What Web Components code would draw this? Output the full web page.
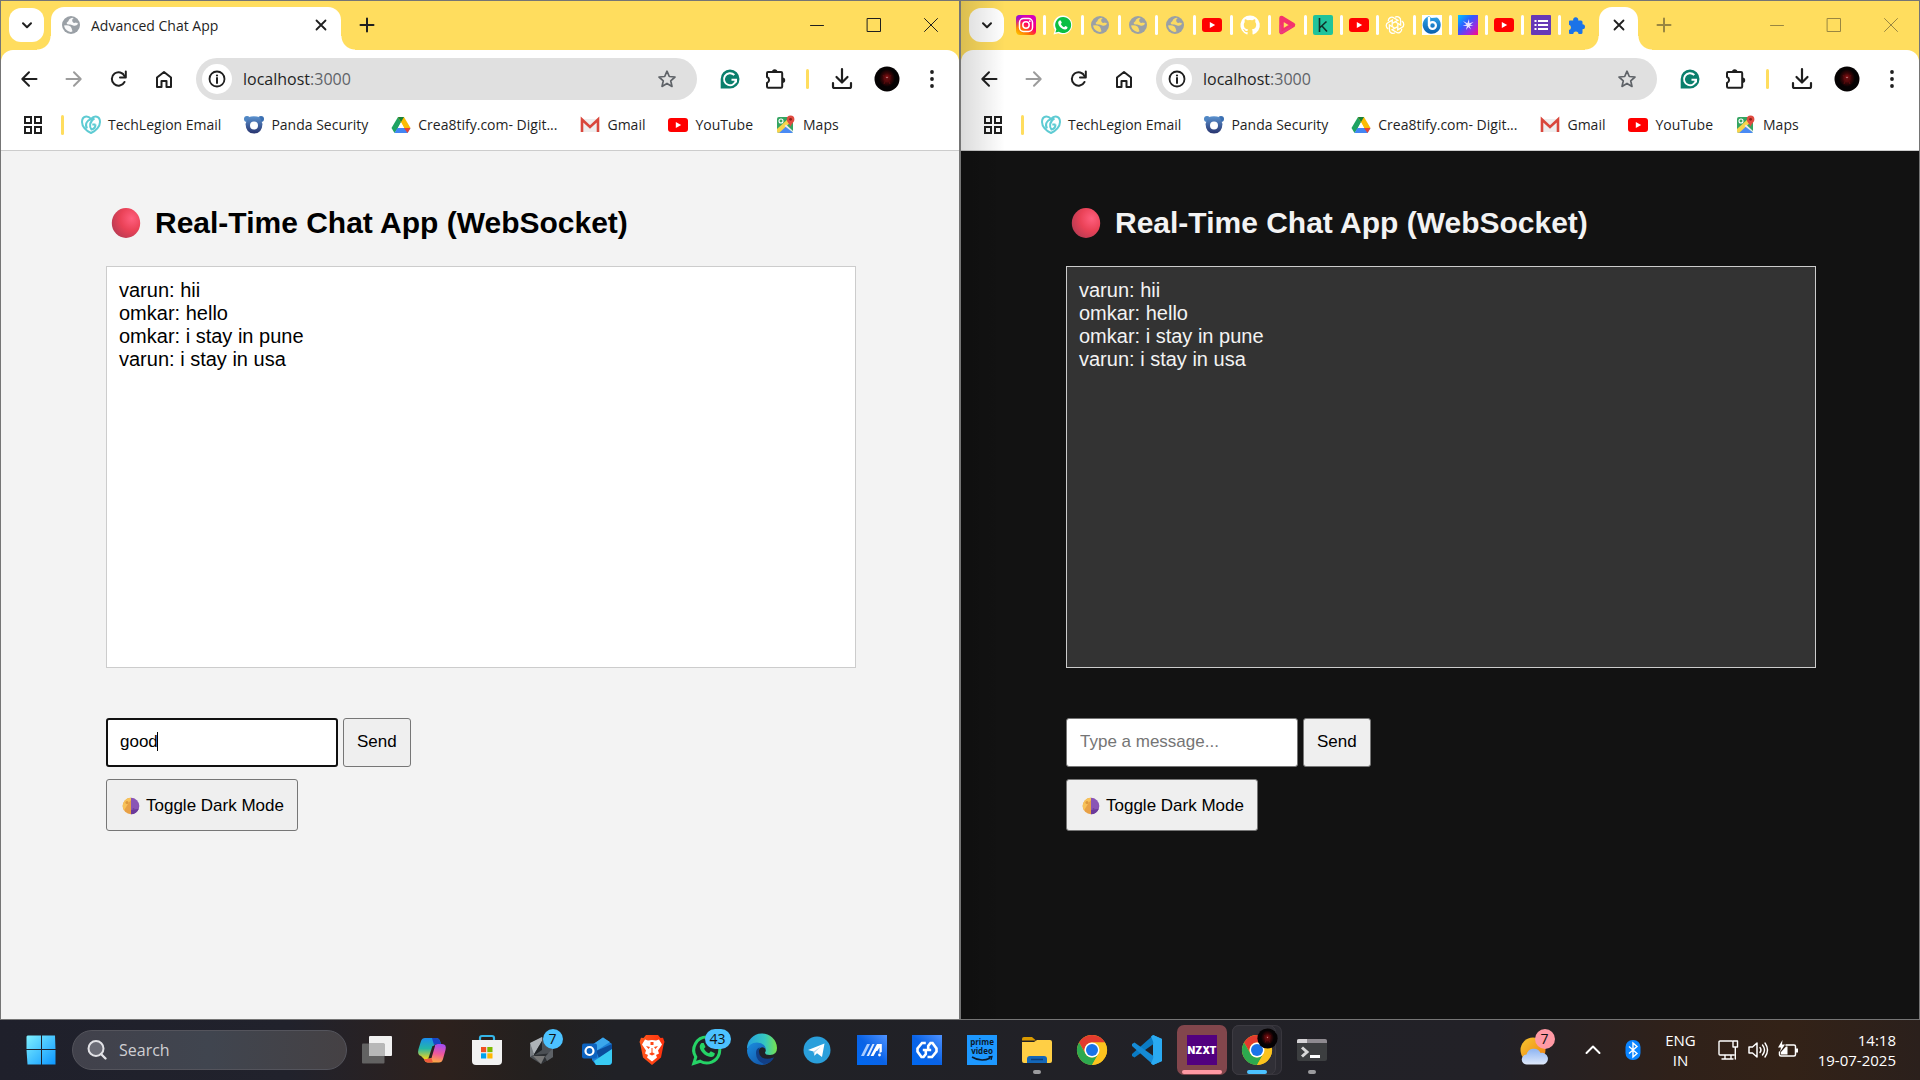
<!DOCTYPE html>
<html lang="en">
<head>
<meta charset="utf-8">
<title>Advanced Chat App</title>
<style>
  html, body { height: 100%; }
  body { margin: 0; display: flex; flex-direction: column; overflow: hidden; background: #202026; font-family: "Open Sans", sans-serif; }
  main { flex: 1; min-height: 0; display: grid; grid-template-columns: 1fr 1fr; }
</style>
</head>
<body>
<main>
  <browser-window>
    <wide-tab slot="tabs">Advanced Chat App</wide-tab>
    <chat-app value="good">
      <chat-message from="varun">hii</chat-message>
      <chat-message from="omkar">hello</chat-message>
      <chat-message from="omkar">i stay in pune</chat-message>
      <chat-message from="varun">i stay in usa</chat-message>
    </chat-app>
  </browser-window>
  <browser-window inactive>
    <pinned-tabs slot="tabs"></pinned-tabs>
    <chat-app dark>
      <chat-message from="varun">hii</chat-message>
      <chat-message from="omkar">hello</chat-message>
      <chat-message from="omkar">i stay in pune</chat-message>
      <chat-message from="varun">i stay in usa</chat-message>
    </chat-app>
  </browser-window>
</main>
<task-bar></task-bar>

<script>
const S = 'fill="none" stroke="currentColor" stroke-linecap="round" stroke-linejoin="round"';
const CHROME = `<circle cx="15" cy="15" r="15" fill="#fbc116"/><path d="M2 7.5A15 15 0 0 1 28 7.5H15A7.5 7.5 0 0 0 8.5 18.8z" fill="#e33b2e"/><path d="M2 7.5A15 15 0 0 0 15 30L21.5 18.8A7.5 7.5 0 0 1 8.5 18.8z" fill="#2da94f"/><path d="M28 7.5A15 15 0 0 1 15 30L21.5 18.8A7.5 7.5 0 0 0 21.5 11.2 8 8 0 0 0 15 7.5z" fill="#fcc31e"/><circle cx="15" cy="15" r="7.5" fill="#fff"/><circle cx="15" cy="15" r="6" fill="#1a73e8"/>`;
const AVATAR = `<defs><radialGradient id="a"><stop offset="0" stop-color="#a01518"/><stop offset=".55" stop-color="#3a0507"/><stop offset="1" stop-color="#050203"/></radialGradient></defs>`;
const ICONS = {
  chevronDown: [12, `<path d="M2 4.2l4 4 4-4" ${S} stroke-width="2" stroke-linecap="butt"/>`],
  close: [12, `<path d="M1.5 1.5l9 9M10.500 1.500l-9 9" ${S} stroke-width="1.800" stroke-linecap="butt"/>`],
  plus: [14, `<path d="M7 .5v13M.5 7h13" ${S} stroke-width="2" stroke-linecap="butt"/>`],
  min: [14, `<path d="M.5 7.500h13" ${S} stroke-width="1"/>`],
  max: [14, `<rect x=".5" y=".5" width="13" height="13" ${S} stroke-width="1"/>`],
  winClose: [14, `<path d="M.5.5l13 13M13.500.5l-13 13" ${S} stroke-width="1"/>`],
  globe: [18, `<circle cx="9" cy="9" r="9" fill="#9aa0a6"/><path d="M10.500 1.800Q7 2.500 6.500 5L4.500 7Q5 9 8.200 8.500l1.800.5q1 1 2.800.8t3.400-2Q15.500 6 13.500 6.300T11 5.500 12.200 3.200z" fill="var(--hole,#fff)" opacity=".95"/><path d="M11 2.500Q9.500 4 10.500 5.800T13.500 6.500q1.500-.200 2.500 1.300Q15 3.500 11 2.500z" fill="#9aa0a6"/><path d="M2 9.500q2-.700 4.500 0t3 2.500 1 3.200Q9 16.500 7 15.500 3 14 2 9.500z" fill="var(--hole,#fff)" opacity=".95"/>`],
  back: [16, `<path d="M15.500 8H1.500M8 1.200L1.300 8 8 14.800" ${S} stroke-width="2" stroke-linecap="butt"/>`],
  forward: [16, `<path d="M.5 8h14M8 1.200L14.700 8 8 14.800" ${S} stroke-width="2" stroke-linecap="butt"/>`],
  reload: [16, `<path d="M13.500 11A6.700 6.700 0 1 1 13.700 5.300" ${S} stroke-width="2"/><path d="M14.800.5v6H9" ${S} stroke-width="2" stroke-linejoin="miter" stroke-linecap="butt"/>`],
  home: [18, `<path d="M2 7.500L9 2l7 5.500V17h-4.500v-6h-5v6H2z" ${S} stroke-width="2" stroke-linejoin="miter"/>`],
  info: [18, `<circle cx="9" cy="9" r="7.500" ${S} stroke-width="1.800"/><path d="M9 8v5" ${S} stroke-width="2" stroke-linecap="butt"/><circle cx="9" cy="5.500" r="1.100" fill="currentColor"/>`],
  star: [20, `<path d="M10 2.200l2.300 5.300 5.700.5-4.300 3.800 1.300 5.600-5-3-5 3 1.300-5.600L2 8l5.700-.5z" ${S} stroke-width="1.700" stroke-linejoin="miter"/>`],
  grammarly: [20, `<path d="M10 .5A9.500 9.500 0 1 1 10 19.500H.7V10A9.400 9.400 0 0 1 10 .5z" fill="#0b7f6c"/><path d="M14.300 6A6 6 0 1 0 16 10.700h-4.500M16 10.700v2.800" fill="none" stroke="#fff" stroke-width="2"/>`],
  puzzle: [22, `<path d="M3 4h13q1.200 0 1.200 1.200V18.500q0 1.200-1.200 1.200H3.200q-1.200 0-1.200-1.200V15a3.200 3.200 0 0 0 0-6V5q0-1 1-1z" ${S} stroke-width="2"/><path d="M7 4a2.700 2.700 0 0 1 5.400 0zM17.500 9.500a2.700 2.700 0 0 1 0 5.400z" fill="currentColor"/>`],
  download: [20, `<path d="M10 0v13M4.500 8l5.500 5.500L15.500 8M1 14v3.500Q1 19 2.500 19h15q1.500 0 1.500-1.500V14" ${S} stroke-width="2.200" stroke-linecap="butt"/>`],
  avatar: [26, AVATAR + `<circle cx="13" cy="13" r="12.500" fill="#050203"/><ellipse cx="13" cy="12" rx="8" ry="9" fill="url(#a)"/><path d="M9 9l4 6 4-6M10 18l3-7 3 7" fill="none" stroke="#5a0c0e"/><circle cx="13" cy="11.500" r=".8" fill="#c88"/>`],
  dots: [18, `<circle cx="9" cy="2" r="1.900" fill="currentColor"/><circle cx="9" cy="9" r="1.900" fill="currentColor"/><circle cx="9" cy="16" r="1.900" fill="currentColor"/>`],
  apps: [18, `<path d="M1 1h6v6H1zM11 1h6v6h-6zM1 11h6v6H1zM11 11h6v6h-6z" fill="none" stroke="currentColor" stroke-width="2"/>`],
  godaddy: [20, `<path d="M10 18C5 16 1 11.500 1 7c0-6 5.500-7 9-3 3.500-4 9-3 9 3 0 4.500-4 9-9 11zM6 13.500C3.500 9 6 5.500 10 4M14.500 9.500h-3.200M14.500 9.500c0 3-2 4.500-4 5-2.500-3-2-8 3-11" fill="none" stroke="#5ecbd3" stroke-width="2"/>`],
  panda: [20, `<defs><linearGradient id="g" x2="0" y2="1"><stop offset="0" stop-color="#5a92cf"/><stop offset="1" stop-color="#28346f"/></linearGradient></defs><circle cx="3" cy="4" r="3" fill="#4e86c4"/><circle cx="17" cy="4" r="3" fill="#3a6fb2"/><path d="M4 2.500Q10 0 16 2.500L18.500 9Q18 18.500 10 18.500T1.500 9z" fill="url(#g)"/><circle cx="10" cy="10.500" r="4" fill="#fff"/>`],
  drive: [20, `<path d="M7 2h6L6.500 14 3.500 18 .5 13z" fill="#1ea362"/><path d="M7 2h6l6.500 11H13z" fill="#fbbc05"/><path d="M6.500 13h13l-3 5h-13z" fill="#4285f4"/><path d="M7 2h6l-3 5z" fill="#188038"/><path d="M13 13h6.500l-3 5z" fill="#ea4335"/><path d="M10 7.200L13.200 13H6.800z" fill="#fff"/>`],
  gmail: [20, `<path d="M2 4h16v13H2z" fill="#eee"/><path d="M2 17V4.500L10 12l8-7.500V17" fill="none" stroke="#d9473c" stroke-width="2.600"/>`],
  youtube: [20, `<rect y="3" width="20" height="14" rx="3" fill="#f00"/><path d="M7.800 7l5.400 3-5.400 3z" fill="#fff"/>`],
  maps: [20, `<rect x="1" y="2" width="16" height="16" rx="2" fill="#34a461"/><path d="M2 18L10 10l7 8z" fill="#4a8af4"/><path d="M1 17V14L13 3l3 3L3 18z" fill="#f7d44c"/><path d="M10 9.500L17 16v1.500L8.500 11z" fill="#e8eaed"/><circle cx="5" cy="6" r="2" fill="none" stroke="#fff" stroke-width="1.100"/><path d="M14.500 12C14 9 10.800 7.500 10.800 4.300a3.800 3.800 0 0 1 7.600 0C18.400 7.500 15 9 14.500 12z" fill="#e04a3f"/><circle cx="14.600" cy="4.300" r="1.400" fill="#8c2019"/>`],
  instagram: [20, `<defs><linearGradient id="g" x1="0" y1="1" x2=".8" y2="0"><stop offset="0" stop-color="#ffd600"/><stop offset=".35" stop-color="#ff6a00"/><stop offset=".6" stop-color="#ff0169"/><stop offset="1" stop-color="#d300c5"/></linearGradient><linearGradient id="h" x2=".6" y2=".6"><stop offset="0" stop-color="#5b1cff"/><stop offset=".6" stop-color="#b0f" stop-opacity="0"/></linearGradient></defs><rect width="20" height="20" rx="4" fill="url(#g)"/><rect width="20" height="20" rx="4" fill="url(#h)"/><rect x="3.500" y="3.500" width="13" height="13" rx="4" fill="none" stroke="#fff" stroke-width="1.500"/><circle cx="10" cy="10" r="3.200" fill="none" stroke="#fff" stroke-width="1.500"/><circle cx="13.800" cy="6.200" r=".9" fill="#fff"/>`],
  whatsapp: [20, `<path d="M10 .5a9.400 9.400 0 1 1-4.600 17.700L.5 19.600 1.900 15A9.400 9.400 0 0 1 10 .5z" fill="#fff"/><path d="M10 2a8 8 0 1 1-4.200 14.700L2.400 17.600l1-3.300A8 8 0 0 1 10 2z" fill="#0bbf43"/><path d="M6.500 5.500l1.300 0 1 2.300-1 1.200c.8 1.600 1.800 2.500 3.300 3.200l1.200-1.200 2.200 1.100c0 2-1.500 2.500-2.500 2.400-3.500-.6-6.500-3.500-6.800-6.500 0-1 .5-2 1.300-2.500z" fill="#fff"/>`],
  github: [20, `<path d="M10 .5A9.700 9.700 0 0 0 7 19.400c.5.100.6-.2.6-.5v-1.800c-2.700.6-3.300-1.100-3.300-1.100-.5-1.200-1.100-1.500-1.100-1.500-.9-.6.100-.6.100-.6 1 .1 1.500 1 1.500 1 .9 1.500 2.300 1.100 2.800.8.100-.6.400-1.100.600-1.300C6 14.200 3.800 13.300 3.800 9.500c0-1 .4-1.900 1-2.600-.1-.3-.4-1.300.1-2.600 0 0 .8-.3 2.700 1a9 9 0 0 1 4.800 0c1.900-1.300 2.700-1 2.700-1 .5 1.300.2 2.300.1 2.600.600.7 1 1.600 1 2.600 0 3.800-2.200 4.600-4.400 4.900.4.300.7.900.7 1.800v2.700c0 .3.200.6.700.5A9.700 9.700 0 0 0 10 .5z" fill="#fff"/>`],
  pinkPlay: [20, `<path d="M4.500 3L16 10 4.500 17z" fill="none" stroke="#f5326c" stroke-width="4.500" stroke-linejoin="round"/><path d="M3.500 18V10M4 18l11-6.500" stroke="#e8438a" stroke-width="2" opacity=".7"/>`],
  kaggle: [20, `<rect width="20" height="20" rx="2" fill="#20c39b"/><path d="M6.500 3v14M13.500 6.500l-7 6.500M8.500 10.500l5.500 6" stroke="#10312a" stroke-width="1.600" fill="none"/>`],
  gpt: [20, `<g fill="none" stroke="#fff" stroke-width="1.300">${[0, 60, 120, 180, 240, 300].map(a => `<path d="M10 2.200c2.500-1.600 6 .2 5.600 3.400v4.500L10.500 7" transform="rotate(${a} 10 10)"/>`).join('')}</g>`],
  blueB: [20, `<defs><linearGradient id="g" x2="0" y2="1"><stop offset="0" stop-color="#2fa3e8"/><stop offset="1" stop-color="#0a5fae"/></linearGradient></defs><rect width="20" height="20" fill="#fff"/><path d="M7 1.200A9 9 0 1 0 15 2.500L9.500 3z" fill="url(#g)"/><circle cx="10.500" cy="10.500" r="3.400" fill="none" stroke="#fff" stroke-width="2.200"/><path d="M7 2v9" stroke="#fff" stroke-width="2.400"/>`],
  spark: [20, `<defs><linearGradient id="g" x2="1" y2="1"><stop offset="0" stop-color="#00c6ff"/><stop offset=".4" stop-color="#2f5bff"/><stop offset=".7" stop-color="#9a2be0"/><stop offset="1" stop-color="#ff0a80"/></linearGradient></defs><rect width="20" height="20" fill="url(#g)"/><path d="M11 4l.3 4.300L15.500 7l-3.300 2.700 3.300.8-4 .4 1.500 3.600-2.600-2.600L8 15l.9-3.900-4.400-.4 4-1.200L5 6l4.400 2.300z" fill="#e8e4ff"/>`],
  forms: [20, `<rect width="20" height="20" rx="1" fill="#673ab7"/><path d="M7 6h10M7 10h10M7 14h10" stroke="#fff" stroke-width="2.200"/><path d="M3.500 6h2M3.500 10h2M3.500 14h2" stroke="#fff" stroke-width="2.200"/>`],
  bluePuzzle: [20, `<path d="M2 6.500q0-1 1-1h3.200a2.600 2.600 0 1 1 5 0H14q1.500 0 1.500 1.500v2.300a2.500 2.500 0 1 1 0 5V17.500q0 1.500-1.500 1.500h-2.500a2.600 2.600 0 0 0-5.200 0H3q-1 0-1-1v-3a2.700 2.700 0 0 0 0-5.200z" fill="#1a73e8"/>`],
  redDot: [30, `<defs><radialGradient id="g" cx=".7" cy=".35" r=".8"><stop offset="0" stop-color="#ff5f7e"/><stop offset=".5" stop-color="#ea4257"/><stop offset="1" stop-color="#b53a52"/></radialGradient></defs><ellipse cx="15" cy="15" rx="14.200" ry="15" fill="url(#g)"/>`],
  moon: [18, `<path d="M9 .7a8.300 8.300 0 0 0 0 16.600z" fill="#e8a146"/><path d="M9 .7a8.300 8.300 0 0 0-7 12.700C5 9 6 6 9 3z" fill="#f7c25a"/><path d="M9 .7a8.300 8.300 0 0 1 0 16.600z" fill="#8a55b5"/><path d="M9 17.300a8.300 8.300 0 0 0 7.800-5.500L9 13z" fill="#6b3a9c"/><circle cx="5" cy="5.500" r="1.500" fill="#dc983c"/><circle cx="11.500" cy="12" r="1" fill="#75439f"/>`],
  start: [30, `<defs><linearGradient id="g" x2="1" y2="1"><stop offset="0" stop-color="#7ff1ff"/><stop offset="1" stop-color="#0c96ff"/></linearGradient></defs><path d="M1.500.5H15V14H.5V1.500zM16 .5h13L29.500 14H16zM.5 15H15v14.500H1.500zM16 15h13.500V29.500H16z" fill="url(#g)"/>`],
  search: [20, `<circle cx="9" cy="8.500" r="7.500" fill="#6b6c76" stroke="#e2e2e6" stroke-width="2"/><path d="M14 14l4.500 4.500" stroke="#e2e2e6" stroke-width="2.400" stroke-linecap="round"/>`],
  taskview: [30, `<rect x="7" y="1" width="23" height="20" rx="1" fill="#f1f1f1"/><rect x="0" y="8.500" width="22.500" height="20" rx="1" fill="#6d6d6d" opacity=".85"/><rect x="7" y="8.500" width="15.500" height="12.500" fill="#b8b8b8"/>`],
  copilot: [30, `<defs><linearGradient id="g" x2="0" y2="1"><stop offset="0" stop-color="#1b8cf0"/><stop offset=".5" stop-color="#24b7a7"/><stop offset="1" stop-color="#f3d31e"/></linearGradient><linearGradient id="h" x1=".6" x2=".4" y2="1"><stop offset="0" stop-color="#a44df0"/><stop offset=".5" stop-color="#f0589a"/><stop offset="1" stop-color="#ffb13d"/></linearGradient></defs><path d="M8 3h11q3 0 4 3l1 3h-4q-3 0-4 3l-3 10q-1 2-3 2H7L4 21Q0 20 1.500 14L4 6q1-3 4-3z" fill="url(#g)"/><path d="M15 3h4q3 0 4 3l1 3h-4q-2 0-3 1z" fill="#1846c8"/><path d="M22 27.500H11q-3 0-4-3.500h4q2 0 3-2l3-10q1-3 4-3h4q5 0 3.500 6L26 24q-1 3.500-4 3.500z" fill="url(#h)"/><path d="M7 24h4q2 0 3-2l2 5.500h-5q-3 0-4-3.500z" fill="#ef5a3c"/><path d="M15.500 11h2.500l-3.500 12h-3z" fill="#2b211f"/>`],
  store: [30, `<path d="M8 6V3q0-2 2-2h10q2 0 2 2v3" fill="none" stroke="#35b6e8" stroke-width="2.200"/><path d="M0 5h30v21q0 4-4 4H4q-4 0-4-4z" fill="#f2f2f2"/><path d="M9 12h5.200v5.200H9z" fill="#f05022"/><path d="M15.300 12h5.200v5.200h-5.200z" fill="#7db900"/><path d="M9 18.300h5.200v5.200H9z" fill="#00a2ed"/><path d="M15.300 18.300h5.200v5.200h-5.200z" fill="#ffb700"/>`],
  crystal: [30, `<path d="M3 8L15 2l11 6v14l-12 7-11-7z" fill="#4b4f54"/><path d="M3 8L15 2l0 4L6 21z" fill="#aeb3b8"/><path d="M6 21L15 6l0 9z" fill="#202327"/><path d="M3 8v14l4-3z" fill="#777c82"/><path d="M7 20l19-2v4l-12 7z" fill="#2d3034"/><path d="M6 21h12l-4 8z" fill="#777"/><path d="M18 22l8-9v9l-6 4z" fill="#5d6166"/>`],
  outlook: [30, `<path d="M10 10L21 2.500 30 9v17q0 4-3 4H14l-4-5z" fill="#1c7fd6"/><path d="M10 10L21 2.500l7 4.500L14 16z" fill="#3ba7ec"/><path d="M14 16L30 9v6l-13 8z" fill="#0b4c9c"/><path d="M12 26L30 14v12q0 4-4 4H14z" fill="#39cbf3"/><rect x="0" y="8.500" width="15" height="15" rx="2" fill="#0c63c0"/><circle cx="7.500" cy="16" r="4" fill="none" stroke="#fff" stroke-width="2.200"/>`],
  brave: [30, `<defs><linearGradient id="g" x2="1"><stop offset="0" stop-color="#ff5a1e"/><stop offset="1" stop-color="#ff2f0c"/></linearGradient></defs><path d="M9 0h12l2.500 3 2.500-.3L27.500 7l-.8 2L24 22.500 15 30 6 22.500 3.300 9l-.8-2L4 2.700l2.500.3z" fill="url(#g)"/><path d="M15 5l4 .5 3-1 3 5-4 6 1 3-3 1.500 1 2.500-5 4-5-4 1-2.500-3-1.500 1-3-4-6 3-5 3 1z" fill="#fff"/><path d="M9 11l4 1-1.500 2zM21 11l-4 1 1.500 2zM13.500 7v3h3V7M12 19l3-2 3 2-3 1.500zM14.500 13h1v4h-1z" fill="#ff4716"/>`],
  whatsappBig: [30, `<path d="M15 2a13 13 0 1 1-6.800 24.200L1.800 28.300l2-6.300A13 13 0 0 1 15 2z" fill="none" stroke="#25d366" stroke-width="3"/><path d="M9.500 8h2.200l1.800 4-1.500 1.800c1.200 2.400 2.600 3.500 5 4.500l1.800-2 4 2c0 3-2.200 4-4 3.800C13 21.300 8 16.500 7.700 11.800c0-1.500.7-3 1.800-3.800z" fill="#25d366"/>`],
  edge: [30, `<defs><linearGradient id="g" x2="1"><stop offset="0" stop-color="#249fe0"/><stop offset=".6" stop-color="#35c8c0"/><stop offset="1" stop-color="#78e34b"/></linearGradient><linearGradient id="h" x2="1" y2="1"><stop offset="0" stop-color="#1a8ee0"/><stop offset="1" stop-color="#12489a"/></linearGradient></defs><path d="M0 14A15 15 0 0 1 30 13q0 7-7 7-5 0-5-2.500c2-2 0-6.500-4-6.500Q3 9 0 14z" fill="url(#g)"/><path d="M0 15Q2 7.500 10 7.500q8 .5 9 7-4-4.500-7 0t2.500 9.500q6 2 12-1.500Q22 30 15 30A15 15 0 0 1 0 15z" fill="url(#h)"/><path d="M9 18q0-5 4-5.500-3 6 2 10 5 2.500 12 0-3 6-10 6.500-8-3-8-11z" fill="#123f86"/>`],
  telegram: [30, `<circle cx="15" cy="15" r="13.500" fill="#2a9fdb"/><path d="M6 15L22.500 8.500 20 22l-5-3.700-2.600 2.500-.8-4.300z" fill="#fff"/><path d="M11.600 16.500l7.500-5.300-6 6-.7 3.600z" fill="#b9d9ec"/>`],
  blueM: [30, `<defs><linearGradient id="g" x1="1" x2="0" y2="1"><stop offset="0" stop-color="#4f93ff"/><stop offset=".5" stop-color="#0a63e6"/><stop offset="1" stop-color="#0068f0"/></linearGradient></defs><rect width="30" height="30" fill="url(#g)"/><path d="M4 21l6-12h3L7 21z" fill="#a9ccff"/><path d="M9.500 21l6-12h2L12 21z" fill="#dce9ff"/><path d="M13.500 21L20 9h4.800v8l-2.300 1v-5.500L20.300 16h-1L16.500 21z" fill="#fff"/><circle cx="22.500" cy="20" r="1.400" fill="#fff"/>`],
  blueLink: [30, `<defs><linearGradient id="g" x1="1" x2="0" y2="1"><stop offset="0" stop-color="#4f93ff"/><stop offset=".5" stop-color="#0a63e6"/><stop offset="1" stop-color="#0068f0"/></linearGradient></defs><rect width="30" height="30" fill="url(#g)"/><path d="M13.800 8H10L5.500 13.500v3L9.500 22h2l2.300-3v-4h-3M15.500 22H20l4.500-5.500v-3L20.500 8h-2l-2.300 3v4h3" fill="none" stroke="#fff" stroke-width="2.600"/>`],
  prime: [30, `<rect width="30" height="30" fill="#1d98ff"/><text x="15" y="10" text-anchor="middle" font-family="Open Sans,sans-serif" font-weight="700" font-size="8" fill="#0b1a2b">prime</text><text x="15" y="19" text-anchor="middle" font-family="Open Sans,sans-serif" font-weight="700" font-size="8" fill="#0b1a2b">video</text><path d="M5 22q9 5.500 18 1.200M21.500 22l3.300-.3-.8 3" fill="none" stroke="#0b1a2b" stroke-width="1.500"/>`],
  folder: [30, `<path d="M0 4q0-2 2-2h8l4 3.500H0z" fill="#d99a00"/><path d="M0 7h12l3-2h13q2 0 2 2v19q0 2-2 2H2q-2 0-2-2z" fill="#ffcf45"/><path d="M5 28v-4q0-3 3-3h14q3 0 3 3v4z" fill="#1467b8"/><path d="M9 24.500h12" stroke="#0a3f7c" stroke-width="1.500"/>`],
  chrome: [30, CHROME],
  vscode: [30, `<path d="M21 0l9 4v22l-9 4z" fill="#2aaaf2"/><path d="M21.500 0L0 19l0 2 2.500 1.500L21.500 9z" fill="#0a7bc4"/><path d="M21.500 30L0 11V9l2.500-1.500L21.500 21z" fill="#158bd6"/><path d="M21 0l9 4v22l-9 4-2-1.500 2.500-6V7.500L19 1.500z" fill="#2aaaf2"/>`],
  nzxt: [30, `<rect width="30" height="30" fill="#52007f"/><text x="15" y="19" text-anchor="middle" font-family="Inter,sans-serif" font-weight="900" font-size="10" fill="#fff">NZXT</text>`],
  terminal: [30, `<rect y="4" width="30" height="22" rx="2" fill="#3c3e40"/><path d="M0 8V6q0-2 2-2h26q2 0 2 2v2z" fill="#8e8a90"/><path d="M0 8V6q0-2 2-2h8v4z" fill="#d5d3d6"/><path d="M5 12.500l5 4.500-5 4.500" fill="none" stroke="#d8d8d8" stroke-width="3"/><path d="M13 21.500h10" stroke="#fff" stroke-width="3"/>`],
  weather: [30, `<defs><linearGradient id="g" x2="1" y2="1"><stop offset="0" stop-color="#f7c62f"/><stop offset="1" stop-color="#ee7d12"/></linearGradient><linearGradient id="h" x2="0" y2="1"><stop offset="0" stop-color="#8db4f2"/><stop offset="1" stop-color="#dfe9fb"/></linearGradient></defs><circle cx="14" cy="15" r="12.500" fill="url(#g)"/><path d="M8 29.500a5 5 0 0 1-.5-10 7.500 7.500 0 0 1 14-1.500 5.800 5.800 0 0 1 3 11.500z" fill="url(#h)"/>`],
  chevronUp: [14, `<path d="M.5 10l6.500-6.500L13.500 10" ${S} stroke-width="2" stroke-linecap="butt"/>`],
  bluetooth: [20, `<rect x="2.500" width="15" height="20" rx="7" fill="#0a84ff"/><path d="M6 6.500l8 7L10 17V3l4 3.500-8 7" fill="none" stroke="#fff" stroke-width="1.400"/>`],
  monitor: [20, `<path d="M14 1H2Q1 1 1 2v12q0 1 1 1h14M7 15v3.500M13 15v3.500M4 19h11M15 1h4.500v6h-4.500zM17.300 7v12" ${S} stroke-width="1.400"/>`],
  volume: [20, `<path d="M1 7h3.500L9 3v14l-4.500-4H1z" ${S} stroke-width="1.500"/><path d="M12 7.500q2 2.500 0 5M14.500 5q4 5 0 10M17 3q5 7 0 14" ${S} stroke-width="1.400"/>`],
  battery: [20, `<path d="M8 5h8q1.500 0 1.500 1.500v8q0 1.500-1.500 1.500H3q-1.500 0-1.500-1.500V12" ${S} stroke-width="1.500"/><path d="M18 8.500h2v4h-2z" fill="currentColor"/><path d="M4.500 0L0 7.500h3L2 12l5-7.500H4z" fill="currentColor"/><path d="M3 14.500V12l5-5.500h1.500v8z" fill="currentColor"/>`]
};

function define(name, html, setup) {
  const tpl = document.createElement('template');
  customElements.define(name, class extends HTMLElement {
    connectedCallback() {
      if (this.shadowRoot) return;
      tpl.innerHTML = typeof html === 'function' ? html(this) : html;
      this.attachShadow({ mode: 'open' }).append(tpl.content.cloneNode(true));
      if (setup) setup(this);
    }
  });
}

define('ui-icon', el => {
  const [box, body] = ICONS[el.getAttribute('name')];
  const size = el.getAttribute('size') || box;
  return `<style>:host{display:block;flex:none;width:${size}px;height:${size}px}svg{display:block;overflow:visible}</style>
  <svg width="${size}" height="${size}" viewBox="0 0 ${box} ${box}" aria-hidden="true">${body}</svg>`;
});

define('icon-button', el => `
<style>
  :host { display: block; flex: none; width: var(--slot, 45px); }
  button { all: unset; display: flex; align-items: center; justify-content: center; width: 100%; height: var(--tall, 40px); color: inherit; }
</style>
<button aria-label="${el.getAttribute('label')}"><ui-icon name="${el.getAttribute('icon')}" size="${el.getAttribute('size') || ''}"></ui-icon></button>`);

define('wide-tab', `
<style>
  :host { display: flex; align-items: center; gap: 11px; position: relative; width: 290px; height: 43px; margin-left: 7px; padding: 0 14px 7px 11px; box-sizing: border-box; background: #fff; border-radius: 13px 13px 0 0; font-size: 14px; color: #1f1f1f; }
  :host::before, :host::after { content: ""; position: absolute; bottom: 0; width: 14px; height: 14px; }
  :host::before { left: -14px; background: radial-gradient(circle at 0 0, transparent 13px, #fff 14px); }
  :host::after { right: -14px; background: radial-gradient(circle at 100% 0, transparent 13px, #fff 14px); }
  span { flex: 1; white-space: nowrap; }
</style>
<ui-icon name="globe"></ui-icon><span><slot></slot></span>
<icon-button style="--slot:12px;--tall:20px" icon="close" label="Close tab"></icon-button>`);

define('pinned-tabs', () => `
<style>
  :host { display: flex; align-items: flex-end; height: 43px; color: #1f1f1f; }
  ul { display: grid; grid-template-columns: repeat(7, 103fr) repeat(9, 100fr); width: 588px; margin: 0 4px 15px 3px; padding: 0; list-style: none; --hole: #ffdd5e; }
  li { display: flex; align-items: center; justify-content: center; height: 20px; position: relative; }
  li:not(:last-child)::after { content: ""; position: absolute; right: -2px; width: 3px; height: 20px; border-radius: 2px; background: #fff; }
  .active { position: relative; display: flex; justify-content: center; width: 39px; height: 43px; background: #fff; border-radius: 13px 13px 0 0; }
  .active::before, .active::after { content: ""; position: absolute; bottom: 0; width: 14px; height: 14px; }
  .active::before { left: -14px; background: radial-gradient(circle at 0 0, transparent 13px, #fff 14px); }
  .active::after { right: -14px; background: radial-gradient(circle at 100% 0, transparent 13px, #fff 14px); }
</style>
<ul>${['instagram', 'whatsapp', 'globe', 'globe', 'globe', 'youtube', 'github', 'pinkPlay', 'kaggle', 'youtube', 'gpt', 'blueB', 'spark', 'youtube', 'forms', 'bluePuzzle'].map(n => `<li><ui-icon name="${n}"></ui-icon></li>`).join('')}</ul>
<div class="active"><icon-button style="--slot:20px;--tall:36px" icon="close" label="Close tab"></icon-button></div>`);

define('bookmark-link', el => `
<style>
  :host { display: block; flex: none; }
  a { display: flex; align-items: center; gap: 7px; color: #1f1f1f; text-decoration: none; font-size: 14px; line-height: 20px; white-space: nowrap; }
</style>
<a href="#"><ui-icon name="${el.getAttribute('icon')}"></ui-icon><slot></slot></a>`);

define('browser-window', `
<style>
  :host { display: flex; flex-direction: column; min-width: 0; box-sizing: border-box; border: 1px solid #757575; background: #ffdd5e; color: #1f1f1f; position: relative; }
  .strip { display: flex; align-items: flex-end; height: 49px; }
  .menu { --slot: 35px; --tall: 34px; margin: 0 0 8px 8px; border-radius: 12px; background: #fff; }
  .add { --slot: 24px; --tall: 24px; margin: 0 0 13px 14px; }
  .controls { display: flex; margin-left: auto; padding-bottom: 5px; --slot: 57px; }
  :host([inactive]) .add, :host([inactive]) .controls { opacity: .45; }
  header { border-radius: 12px 12px 0 0; background: #fff; border-bottom: 1px solid #ccc; height: 100px; }
  .bar { display: flex; align-items: center; height: 42px; padding: 8px 5px 0 5px; }
  .omni { flex: 1; display: flex; align-items: center; height: 42px; margin: 0 10px; padding: 0 20px 0 6px; box-sizing: border-box; border-radius: 21px; background: #e0e0e0; font-size: 16px; }
  .site { --slot: 30px; --tall: 30px; border-radius: 50%; background: #fff; margin-right: 11px; }
  .url { flex: 1; } .port { color: #5f6368; }
  .gap { width: 3px; height: 20px; border-radius: 2px; background: #ffdd5e; }
  .marks { display: flex; align-items: center; gap: 23px; height: 50px; padding-left: 23px; }
  .marks .gap { margin: 0 -6px 0 -4px; }
  .page { flex: 1; min-height: 0; display: flex; }
  ::slotted(chat-app) { flex: 1; }
  .shade { display: none; }
  :host([inactive]) .shade { display: block; position: absolute; inset: 0 auto 0 0; width: 44px; background: linear-gradient(90deg, rgba(0,0,0,.14), rgba(0,0,0,0)); pointer-events: none; }
</style>
<div class="strip">
  <icon-button class="menu" icon="chevronDown" label="Search tabs"></icon-button>
  <slot name="tabs"></slot>
  <icon-button class="add" icon="plus" label="New tab"></icon-button>
  <div class="controls">
    <icon-button icon="min" label="Minimize"></icon-button>
    <icon-button icon="max" label="Maximize"></icon-button>
    <icon-button icon="winClose" label="Close"></icon-button>
  </div>
</div>
<header>
  <div class="bar">
    <icon-button icon="back" label="Back"></icon-button>
    <icon-button icon="forward" label="Forward" style="color:#9c9c9c"></icon-button>
    <icon-button icon="reload" label="Reload"></icon-button>
    <icon-button icon="home" label="Home"></icon-button>
    <div class="omni">
      <icon-button class="site" icon="info" label="Site information"></icon-button>
      <span class="url">localhost<span class="port">:3000</span></span>
      <icon-button icon="star" label="Bookmark this tab" style="--slot:20px;color:#5f6368"></icon-button>
    </div>
    <icon-button icon="grammarly" label="Grammarly"></icon-button>
    <icon-button icon="puzzle" label="Extensions" style="--slot:48px"></icon-button>
    <span class="gap" style="margin:0 10px 0 6px"></span>
    <icon-button icon="download" label="Downloads"></icon-button>
    <icon-button icon="avatar" label="Profile"></icon-button>
    <icon-button icon="dots" label="Menu"></icon-button>
  </div>
  <nav class="marks" aria-label="Bookmarks">
    <icon-button icon="apps" label="Tab groups" style="--slot:18px"></icon-button>
    <span class="gap"></span>
    <bookmark-link icon="godaddy">TechLegion Email</bookmark-link>
    <bookmark-link icon="panda">Panda Security</bookmark-link>
    <bookmark-link icon="drive">Crea8tify.com- Digit...</bookmark-link>
    <bookmark-link icon="gmail">Gmail</bookmark-link>
    <bookmark-link icon="youtube">YouTube</bookmark-link>
    <bookmark-link icon="maps">Maps</bookmark-link>
  </nav>
</header>
<div class="page"><slot></slot></div>
<div class="shade"></div>`);

define('chat-message', el => `
<style>:host { display: block; line-height: 23px; }</style>${el.getAttribute('from')}: <slot></slot>`);

define('chat-app', `
<style>
  :host { display: block; padding: 52px 24px 0 26px; background: #f3f3f3; color: #000; font-family: "Liberation Sans", Arial, sans-serif; font-size: 20px; }
  :host([dark]) { background: #121212; color: #f3f3f3; }
  .wrap { max-width: 750px; margin: 0 auto; }
  h2 { display: flex; align-items: center; gap: 14px; margin: 0 0 23px; padding-left: 5px; font-size: 30px; line-height: 40px; }
  .log { height: 400px; box-sizing: content-box; border: 1px solid #ccc; background: #fff; }
  :host([dark]) .log { background: #333; }
  .lines { padding: 12px; }
  form { display: flex; gap: 5px; margin: 50px 0 12px; }
  .field { position: relative; }
  input, button { font: 17px "Liberation Sans", Arial, sans-serif; border: 1px solid #767676; border-radius: 3px; box-sizing: border-box; color: #000; }
  input { display: block; width: 232px; height: 49px; padding: 0 13px 2px; background: #fff; outline: none; }
  input::placeholder { color: #757575; }
  input.typing { border: 2px solid #101010; padding: 0 12px 2px; }
  .caret { position: absolute; left: 51px; top: 14px; width: 1px; height: 19px; background: #000; }
  button { height: 49px; padding: 0 13px 2px; background: #efefef; }
  .toggle { display: flex; align-items: center; gap: 6px; height: 52px; padding: 2px 13px 0 15px; }
</style>
<div class="wrap">
  <h2><ui-icon name="redDot"></ui-icon>Real-Time Chat App (WebSocket)</h2>
  <div class="log"><div class="lines"><slot></slot></div></div>
  <form>
    <div class="field"><input type="text" aria-label="Message" placeholder="Type a message..." autocomplete="off"></div>
    <button type="button">Send</button>
  </form>
  <button type="button" class="toggle"><ui-icon name="moon"></ui-icon>Toggle Dark Mode</button>
</div>`, el => {
  const value = el.getAttribute('value');
  if (!value) return;
  const input = el.shadowRoot.querySelector('input');
  input.value = value;
  input.classList.add('typing');
  const caret = document.createElement('span');
  caret.className = 'caret';
  input.after(caret);
});

define('task-item', el => `
<style>
  :host { display: block; flex: none; width: 55px; height: 60px; }
  button { all: unset; position: relative; display: flex; align-items: center; justify-content: center; width: 50px; height: 50px; margin: 5px auto; border-radius: 7px; box-sizing: border-box; }
  :host([alert]) button { background: #82464c; }
  :host([open]) button { background: #2b2a31; box-shadow: inset 0 0 0 1px #38363d; }
  :host([open]) button::before { content: ""; position: absolute; inset: 0 6px 0 0; border: 1px solid #3d3b42; border-radius: 7px; background: #302f36; }
  ui-icon { position: relative; }
  .mark { position: absolute; bottom: 1px; left: 50%; translate: -50%; width: 8px; height: 4px; border-radius: 2px; background: #9b9b9e; }
  :host([alert]) .mark { width: 40px; background: #ff99a4; }
  :host([open]) .mark { width: 20px; background: #4cc2ff; }
  .badge { position: absolute; left: 36px; top: 4px; translate: -50%; min-width: 20px; height: 20px; padding: 0 5px; box-sizing: border-box; border-radius: 10px; background: var(--badge, #4cc2ff); color: #111; font-size: 14px; line-height: 20px; text-align: center; }
  .face { position: absolute; right: 4px; top: 3px; }
</style>
<button aria-label="${el.getAttribute('label')}"><ui-icon name="${el.getAttribute('icon')}"></ui-icon>
${el.hasAttribute('badge') ? `<span class="badge">${el.getAttribute('badge')}</span>` : ''}
${el.hasAttribute('open') ? '<ui-icon class="face" name="avatar" size="21"></ui-icon>' : ''}
${el.hasAttribute('running') ? '<span class="mark"></span>' : ''}</button>`);

define('task-bar', `
<style>
  :host { display: flex; align-items: center; flex: none; height: 60px; padding: 0 24px 0 13px; color: #fff; font-size: 15px;
    background: linear-gradient(90deg, #1f202b 0, #21222c 15%, #2d211d 23%, #23201f 28%, #202126 32%, #222127 78%, #2f211a 87%, #332217 93%, #2b201c 100%); }
  .search { display: flex; align-items: center; gap: 12px; width: 275px; height: 40px; margin: 0 2px 0 4px; padding: 0 14px; box-sizing: border-box; border: 1px solid #54545c; border-radius: 20px; background: linear-gradient(90deg, #41414b, #40454f 50%, #454144); }
  input { all: unset; flex: 1; min-width: 0; font-size: 16px; color: #fff; }
  input::placeholder { color: #cfcfd3; }
  .tray { display: flex; align-items: center; margin-left: auto; }
  .tray p { margin: 0; line-height: 20px; }
  .lang { width: 55px; text-align: center; }
  .clock { text-align: right; width: 88px; }
</style>
<task-item icon="start" label="Start"></task-item>
<label class="search"><ui-icon name="search"></ui-icon><input type="text" placeholder="Search" aria-label="Search"></label>
<task-item icon="taskview" label="Task view"></task-item>
<task-item icon="copilot" label="Copilot"></task-item>
<task-item icon="store" label="Store"></task-item>
<task-item icon="crystal" label="Cursor" badge="7"></task-item>
<task-item icon="outlook" label="Outlook"></task-item>
<task-item icon="brave" label="Brave"></task-item>
<task-item icon="whatsappBig" label="WhatsApp" badge="43"></task-item>
<task-item icon="edge" label="Edge"></task-item>
<task-item icon="telegram" label="Telegram"></task-item>
<task-item icon="blueM" label="MyASUS"></task-item>
<task-item icon="blueLink" label="GlideX"></task-item>
<task-item icon="prime" label="Prime Video"></task-item>
<task-item icon="folder" label="File Explorer" running></task-item>
<task-item icon="chrome" label="Chrome"></task-item>
<task-item icon="vscode" label="Visual Studio Code"></task-item>
<task-item icon="nzxt" label="NZXT" alert running></task-item>
<task-item icon="chrome" label="Chrome windows" open running></task-item>
<task-item icon="terminal" label="Terminal" running></task-item>
<div class="tray">
  <task-item icon="weather" label="Weather" badge="7" style="--badge:#ff99a4;margin-right:12px"></task-item>
  <icon-button icon="chevronUp" label="Hidden icons" style="--slot:40px"></icon-button>
  <icon-button icon="bluetooth" label="Bluetooth" style="--slot:40px"></icon-button>
  <div class="lang"><p>ENG</p><p>IN</p></div>
  <icon-button icon="monitor" label="Network" style="--slot:40px"></icon-button>
  <icon-button icon="volume" label="Volume" style="--slot:20px"></icon-button>
  <icon-button icon="battery" label="Battery" style="--slot:40px"></icon-button>
  <div class="clock"><p>14:18</p><p>19-07-2025</p></div>
</div>`);
</script>
</body>
</html>
